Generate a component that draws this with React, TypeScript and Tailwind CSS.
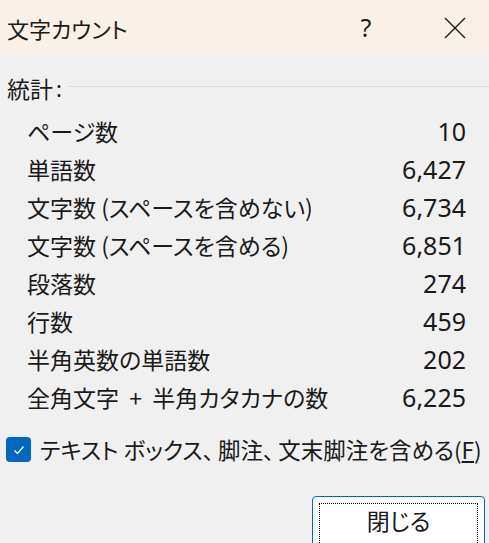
import React from 'react';

const stats: [string, string][] = [
  ['ページ数', '10'],
  ['単語数', '6,427'],
  ['文字数 (スペースを含めない)', '6,734'],
  ['文字数 (スペースを含める)', '6,851'],
  ['段落数', '274'],
  ['行数', '459'],
  ['半角英数の単語数', '202'],
  ['全角文字 \u00a0+\u00a0 半角カタカナの数', '6,225'],
];

const num = "font-[family-name:'Noto_Sans','Open_Sans',sans-serif]";

const App: React.FC = () => {
  return (
    <div className="w-[489px] h-[543px] overflow-hidden bg-[#f0f0f0] text-[#1a1a1a] font-[family-name:'Noto_Sans_CJK_JP','Noto_Sans',sans-serif] [font-feature-settings:'palt']">
      {/* タイトルバー */}
      <div className="h-[55px] bg-[#f9f1e7] flex items-center pl-[7px]">
        <span className="text-[22px] flex-1 leading-none">文字カウント</span>
        <span className={`text-[25px] w-[24px] text-center mr-[66px] leading-none ${num}`}>?</span>
        <svg width="22" height="22" viewBox="0 0 22 22" className="mr-[23px]">
          <path d="M1 1 L21 21 M21 1 L1 21" stroke="#1a1a1a" strokeWidth="1.4" />
        </svg>
      </div>

      <div className="flex items-center pl-[7px] mt-[19px] h-[28px]">
        <span className="text-[23px] leading-none">統計</span>
        <span className={`text-[22px] leading-none ml-[3px] ${num}`}>:</span>
        <div className="flex-1 h-px bg-[#d9d9d9] ml-[6px] -mt-[3px]" />
      </div>

      <div className="mt-[10px] pl-[27px] pr-[23px]">
        {stats.map(([label, value]) => (
          <div key={label} className="flex justify-between items-center h-[38px]">
            <span className="text-[23px] whitespace-pre">{label}</span>
            <span className={`text-[25px] leading-none ${num}`}>{value}</span>
          </div>
        ))}
      </div>

      <div className="flex items-center h-[25px] pl-[6px] mt-[21px]">
        <div className="w-[25px] h-[25px] rounded-[4px] bg-[#0067c0] flex items-center justify-center">
          <svg width="14" height="14" viewBox="0 0 14 14">
            <path d="M2.5 7.5 L5.5 10.5 L11.5 3.5" fill="none" stroke="#ffffff" strokeWidth="1.3" />
          </svg>
        </div>
        <span className="ml-[9px] text-[22.5px] whitespace-nowrap">
          テキスト ボックス<span className="pr-[4px]">、</span>脚注<span className="pr-[4px]">、</span>文末脚注を含める(<span className="underline underline-offset-2">F</span>)
        </span>
      </div>

      <div className="flex justify-end pr-[4px] mt-[34px]">
        <button className="w-[173px] h-[56px] rounded-[4px] border border-[#0067c0] bg-white pt-[6px] px-[6px]">
          <div className="h-full border border-dotted border-black flex items-start justify-center pt-[5px] text-[23px] leading-none">
            閉じる
          </div>
        </button>
      </div>
    </div>
  );
};

export default App;
